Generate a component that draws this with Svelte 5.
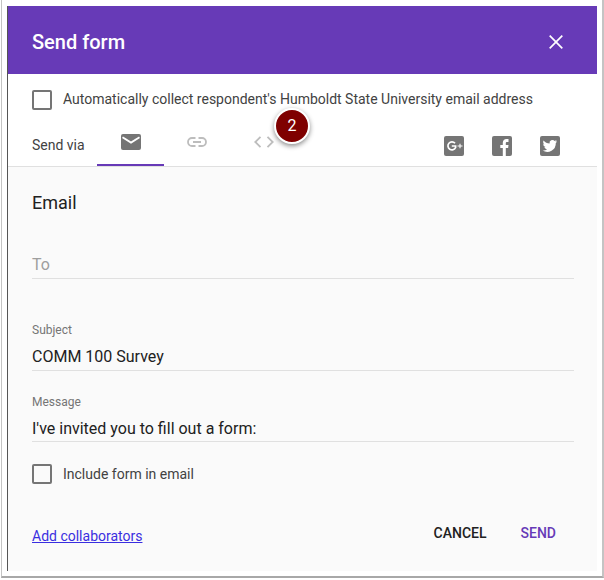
<script>
  let collect = $state(false);
  let includeForm = $state(false);
</script>

<div class="shot">
  <div class="dialog">
    <header class="head">
      <h1>Send form</h1>
      <svg class="close" viewBox="0 0 14 14" width="14" height="14">
        <path d="M0.7 0.7L13.3 13.3M13.3 0.7L0.7 13.3" fill="none" stroke="#fff" stroke-width="1.7" />
      </svg>
    </header>

    <section class="top">
      <label class="check collect">
        <input type="checkbox" bind:checked={collect} />
        <span>Automatically collect respondent's Humboldt State University email address</span>
      </label>

      <div class="via">
        <span class="via-label">Send via</span>
        <div class="tab active">
          <svg viewBox="0 0 20 16" width="20" height="16">
            <path d="M2 0h16a2 2 0 0 1 2 2v12a2 2 0 0 1-2 2H2a2 2 0 0 1-2-2V2a2 2 0 0 1 2-2z" fill="#757575" />
            <path d="M1.5 3.2L10 8.6l8.5-5.4" fill="none" stroke="#fff" stroke-width="1.8" />
          </svg>
        </div>
        <div class="tab link">
          <svg viewBox="0 0 20 10" width="20" height="10">
            <path d="M8.5 1H5a4 4 0 0 0 0 8h3.500M11.500 1H15a4 4 0 0 1 0 8h-3.500M6 5h8" fill="none" stroke="#bdbdbd" stroke-width="1.800" />
          </svg>
        </div>
        <div class="tab code">
          <svg viewBox="0 0 20 12" width="20" height="12">
            <path d="M6.500 0.800L1.300 6l5.200 5.200M13.500 0.800L18.700 6l-5.200 5.200" fill="none" stroke="#bdbdbd" stroke-width="1.800" />
          </svg>
        </div>

        <div class="social">
          <svg viewBox="0 0 20 20" width="20" height="20">
            <rect width="20" height="20" rx="2" fill="#757575" />
            <path d="M11 7.300A4 4 0 1 0 11.600 11.500V10H7.800" fill="none" stroke="#fff" stroke-width="1.700" />
            <path d="M13.500 10h5M16 7.800v4.400" fill="none" stroke="#fff" stroke-width="1.100" />
          </svg>
          <svg viewBox="0 0 20 20" width="20" height="20">
            <rect width="20" height="20" rx="2" fill="#757575" />
            <path d="M10.800 20v-8H8.300V9h2.500V6.800C10.800 4.300 12.300 3 14.500 3h2v3h-1.400c-1 0-1.300.5-1.300 1.300V9h2.700l-.4 3h-2.300v8z" fill="#fff" />
          </svg>
          <svg viewBox="0 0 20 20" width="20" height="20">
            <rect width="20" height="20" rx="2" fill="#757575" />
            <path d="M17 5.300c-.5.200-1.100.4-1.700.5.600-.4 1.100-1 1.300-1.700-.6.400-1.200.6-1.900.8a3 3 0 0 0-5.100 2.700C7.200 7.500 5 6.300 3.600 4.500c-.8 1.400-.4 3.100.9 4-.5 0-.9-.1-1.300-.4 0 1.500 1 2.700 2.400 3-.4.100-.9.100-1.300 0 .4 1.200 1.500 2 2.800 2.100A6 6 0 0 1 2.700 14.500a8.500 8.500 0 0 0 13.100-7.500c.5-.4 1-.9 1.200-1.700z" fill="#fff" />
          </svg>
        </div>
      </div>
      <span class="badge">2</span>
    </section>

    <section class="body">
      <h2>Email</h2>

      <div class="field to">
        <div class="value placeholder">To</div>
      </div>
      <div class="field subject">
        <div class="label">Subject</div>
        <div class="value">COMM 100 Survey</div>
      </div>
      <div class="field message">
        <div class="label">Message</div>
        <div class="value">I've invited you to fill out a form:</div>
      </div>

      <label class="check include">
        <input type="checkbox" bind:checked={includeForm} />
        <span>Include form in email</span>
      </label>

      <div class="foot">
        <a href="#collab">Add collaborators</a>
        <div class="actions">
          <button class="cancel">CANCEL</button>
          <button class="send">SEND</button>
        </div>
      </div>
    </section>
  </div>
</div>

<style>
  :global(body) {
    margin: 0;
    background: #fff;
  }

  .shot {
    box-sizing: border-box;
    width: 603px;
    height: 578px;
    margin-left: 1px;
    padding: 6px 5px 5px 5px;
    background: #fff;
    border-left: 1px solid #c4c4c4;
    border-right: 2px solid #c4c4c4;
    border-bottom: 2px solid #a8a8a8;
    font-family: Roboto, "Liberation Sans", sans-serif;
    color: #424242;
  }

  .dialog {
    display: flex;
    flex-direction: column;
    height: 100%;
    border-left: 1px solid #555;
  }

  .head {
    flex: none;
    box-sizing: border-box;
    display: flex;
    align-items: center;
    justify-content: space-between;
    height: 68px;
    padding: 4px 34px 0 24px;
    background: #673ab7;
  }

  h1 {
    margin: 0;
    font-size: 20px;
    font-weight: 500;
    color: #fff;
  }

  .top {
    position: relative;
    flex: none;
    height: 93px;
    background: #fff;
    border-bottom: 1px solid #e0e0e0;
    box-sizing: border-box;
  }

  .check {
    display: flex;
    align-items: center;
    gap: 11px;
    font-size: 14px;
  }

  .collect span {
    padding-bottom: 2px;
  }

  .check input {
    appearance: none;
    box-sizing: border-box;
    flex: none;
    width: 20px;
    height: 20px;
    margin: 0;
    border: 2px solid #757575;
    border-radius: 2px;
    background: transparent;
  }

  .collect {
    padding: 16px 0 0 24px;
  }

  .via {
    display: flex;
    align-items: center;
    height: 40px;
    margin-top: 16px;
    padding-left: 24px;
    padding-right: 37px;
  }

  .via-label {
    width: 65px;
    font-size: 14px;
    padding-bottom: 2px;
  }

  .tab {
    box-sizing: border-box;
    display: flex;
    align-items: center;
    justify-content: center;
    width: 67px;
    height: 40px;
    padding-bottom: 6px;
    border-bottom: 2px solid transparent;
  }

  .tab.active {
    border-bottom-color: #673ab7;
  }

  .tab.link {
    width: 66px;
  }

  .tab.code {
    width: 68px;
  }

  .social {
    display: flex;
    gap: 28px;
    margin-left: auto;
  }

  .badge {
    position: absolute;
    left: 266px;
    top: 34px;
    box-sizing: border-box;
    width: 36px;
    height: 36px;
    line-height: 32px;
    text-align: center;
    font-size: 16px;
    color: #fff;
    background: #7f0000;
    border: 2px solid #fff;
    border-radius: 50%;
    box-shadow: 0 2px 5px rgba(0, 0, 0, 0.45);
  }

  .body {
    flex: 1;
    padding: 0 23px 0 24px;
    background: #fafafa;
  }

  h2 {
    margin: 0;
    padding-top: 26px;
    font-size: 18px;
    font-weight: 400;
    line-height: 20px;
    color: #212121;
  }

  .field {
    border-bottom: 1px solid #e0e0e0;
  }

  .to {
    margin-top: 42px;
  }

  .subject {
    margin-top: 44px;
  }

  .message {
    margin-top: 24px;
  }

  .label {
    font-size: 12px;
    line-height: 14px;
    color: #757575;
  }

  .value {
    margin-top: 10px;
    padding-bottom: 3px;
    font-size: 16px;
    line-height: 20px;
    color: #212121;
  }

  .message .value {
    padding-bottom: 2px;
  }

  .placeholder {
    color: #9e9e9e;
    margin-top: 0;
  }

  .include {
    margin-top: 22px;
  }

  .foot {
    display: flex;
    align-items: center;
    justify-content: space-between;
    margin-top: 40px;
  }

  .foot a {
    padding-top: 4px;
    font-size: 14px;
    color: #3a2ee0;
  }

  .actions {
    display: flex;
    gap: 34px;
    padding-right: 18px;
    padding-bottom: 2px;
  }

  button {
    padding: 0;
    border: 0;
    background: none;
    font: 500 14px Roboto, "Liberation Sans", sans-serif;
  }

  .cancel {
    color: #212121;
  }

  .send {
    color: #673ab7;
  }
</style>
